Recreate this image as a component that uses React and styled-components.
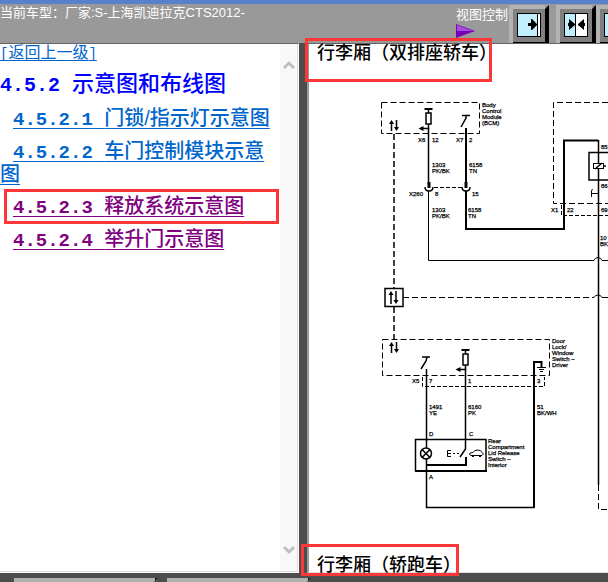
import React from "react";
import styled, { createGlobalStyle } from "styled-components";

const GlobalStyle = createGlobalStyle`
  * {
    box-sizing: border-box;
  }

  body {
    margin: 0;
    background: #4d4d4d;
    font-family: "Liberation Sans", "Noto Sans CJK SC", sans-serif;
  }
`;

// Styled Components
const Page = styled.div`
  display: flex;
  flex-direction: column;
  height: 100vh;
  overflow: hidden;
`;

const Header = styled.header`
  display: grid;
  grid-template-columns: 75% 1fr;
  flex: none;
  height: 43px;
  border-top: 4px solid #5b80cb;
  background: #999;
  color: #fff;
  font-size: 13px;
  line-height: 18px;
  white-space: nowrap;
  overflow: hidden;
`;

const VehicleTitle = styled.div`
  min-width: 0;
  overflow: hidden;
`;

const Tools = styled.div`
  display: flex;
  padding-top: 1px;
`;

const ViewControl = styled.div`
  flex: none;
  width: 53px;
  padding-top: 1px;

  svg {
    display: block;
  }
`;

const ViewButton = styled.button`
  flex: none;
  width: 40px;
  height: 38px;
  margin-right: ${(props) => props.$gap || 0}px;
  padding: 0;
  border: none;
  background: none;
  cursor: pointer;

  svg {
    display: block;
  }
`;

const Frames = styled.div`
  display: grid;
  grid-template-columns: 299px 8px 1fr;
  flex: 1;
  min-height: 0;
`;

const Sidebar = styled.nav`
  display: flex;
  min-width: 0;
  border-top: 1px solid #666;
  border-right: 1px solid #fff;
  border-bottom: 1px solid #fff;
  background: #fff;
`;

const Contents = styled.div`
  flex: 1;
  min-width: 0;
  border-bottom: 1px solid #ddd;
`;

const Scrollbar = styled.div`
  display: flex;
  flex-direction: column;
  justify-content: space-between;
  align-items: center;
  width: 18px;
  padding: 16px 0;
  border-right: 1px solid #ddd;
  border-bottom: 1px solid #ddd;
  background: #f8f8f8;
`;

const Divider = styled.div`
  background: #4d4d4d;
`;

const BackLink = styled.a`
  display: block;
  color: #0066cc;
  font-size: 16px;
  line-height: 18px;
  text-underline-offset: 2px;
  text-decoration-skip-ink: none;
`;

const Mono = styled.span`
  font-family: "Liberation Mono", monospace;
  font-size: ${(props) => props.$size}px;
  font-weight: ${(props) => (props.$bold ? "bold" : "normal")};
  line-height: 1;
  white-space: pre;
`;

const Title = styled.h1`
  margin: 9px 0 10px;
  color: #0000ff;
  font-size: 22px;
  font-weight: 500;
  line-height: 26px;
`;

const TopicList = styled.ul`
  display: flex;
  flex-direction: column;
  gap: 10px;
  margin: 0;
  padding: 0;
  list-style: none;
`;

const Topic = styled.li`
  position: relative;
  font-size: 20px;
  font-weight: 500;
  line-height: 22px;
  text-indent: 13px;
`;

const TopicLink = styled.a`
  color: ${(props) => (props.$visited ? "#800080" : "#0066cc")};
  text-decoration-thickness: 1px;
  text-decoration-skip-ink: none;
  text-underline-offset: 3px;
`;

const Mark = styled.span`
  position: absolute;
  inset: ${(props) => props.$inset};
  border: 3px solid #fb3737;
  pointer-events: none;
`;

const Content = styled.main`
  display: flex;
  flex-direction: column;
  justify-content: space-between;
  min-width: 0;
  border-top: 1px solid #666;
  border-left: 2px solid #999;
  border-bottom: 1px solid #ddd;
  background: #fff;
`;

const SectionTitle = styled.h2`
  position: relative;
  align-self: flex-start;
  flex: none;
  height: ${(props) => (props.$clipped ? 16 : 18)}px;
  margin: 0 0 0 8px;
  color: #000;
  font-size: 18px;
  font-weight: 500;
  line-height: 18px;
  white-space: nowrap;
`;

const DiagramArea = styled.div`
  flex: 1;
  min-height: 0;
  padding-top: 36px;
  overflow: hidden;

  svg {
    display: block;
  }
`;

const BottomBar = styled.footer`
  display: flex;
  flex: none;
  gap: 9px;
  height: 9px;
  padding: 5px 0 0 14px;
  background: #4d4d4d;
`;

const BottomTab = styled.div`
  width: 144px;
  background: #b0b0b0;
  border-right: 3px solid #111;
  clip-path: polygon(0 0, 100% 0, 97% 100%, 0 100%);
`;

const topics = [
  { number: "4.5.2.1", name: "门锁/指示灯示意图" },
  { number: "4.5.2.2", name: "车门控制模块示意图" },
  { number: "4.5.2.3", name: "释放系统示意图", visited: true, marked: true },
  { number: "4.5.2.4", name: "举升门示意图", visited: true },
];

// [x, baseline of the first line, lines]
const labels = [
  [482, 107, ["Body", "Control", "Module", "(BCM)"]],
  [418, 142, ["X6"]],
  [432, 142, ["12"]],
  [456, 142, ["X7"]],
  [469, 142, ["2"]],
  [432, 167, ["1303", "PK/BK"]],
  [469, 167, ["6158", "TN"]],
  [409, 196, ["X260"]],
  [435, 196, ["8"]],
  [472, 196, ["15"]],
  [432, 212, ["1303", "PK/BK"]],
  [468, 212, ["6158", "TN"]],
  [601, 149, ["85"]],
  [601, 188, ["86"]],
  [551, 212, ["X1"]],
  [567, 212, ["22"]],
  [601, 212, ["69"]],
  [600, 240, ["10", "BK"]],
  [552, 343, ["Door", "Lock/", "Window", "Switch –", "Driver"]],
  [412, 383, ["X5"]],
  [429, 383, ["7"]],
  [468, 383, ["1"]],
  [537, 383, ["3"]],
  [429, 409, ["1491", "YE"]],
  [468, 409, ["6160", "PK"]],
  [537, 409, ["51", "BK/WH"]],
  [429, 436, ["D"]],
  [469, 436, ["C"]],
  [429, 479, ["A"]],
  [488, 443, ["Rear", "Compartment", "Lid Release", "Switch –", "Interior"]],
];

const Chevron = ({ up }) => (
  <svg width="12" height="10" viewBox="0 0 12 10" aria-hidden="true">
    <path
      d={up ? "M1 8L6 3L11 8" : "M1 2L6 7L11 2"}
      fill="none"
      stroke="#bfbfbf"
      strokeWidth="3"
    />
  </svg>
);

const ButtonFace = ({ children }) => (
  <svg width="40" height="38" viewBox="0 0 40 38" aria-hidden="true">
    <rect width="36" height="38" fill="#b3b3b3" />
    <rect x="4" y="4" width="32" height="33" fill="#808080" />
    <path d="M36 4L40 0V38H4V37H36Z" fill="#000" />
    {children}
  </svg>
);

const ShowRightIcon = () => (
  <ButtonFace>
    <rect x="8" y="8" width="24" height="24" fill="#000" />
    <rect x="9" y="9" width="19" height="22" fill="#c0f0ff" />
    <rect x="29" y="9" width="2" height="22" fill="#fff" />
    <path d="M19 18H22V14H23L28 19V20L23 25H22V21H19Z" fill="#000" />
  </ButtonFace>
);

const SplitIcon = () => (
  <ButtonFace>
    <rect x="8" y="8" width="24" height="24" fill="#000" />
    <rect x="9" y="9" width="10" height="22" fill="#c0f0ff" />
    <rect x="20" y="9" width="11" height="22" fill="#fff" />
    <path d="M12 18H13V14L19 19V20L13 25V21H12Z" fill="#000" />
    <path d="M29 18H28V14L22 19V20L28 25V21H29Z" fill="#000" />
  </ButtonFace>
);

const ArrowPair = ({ x, y, size }) => (
  <g>
    <path
      d={`M${x} ${y + size}V${y + 2}M${x + 5} ${y}V${y + size - 2}`}
      strokeWidth="1.5"
    />
    <path
      d={`M${x - 2.5} ${y + 4}L${x} ${y}L${x + 2.5} ${y + 4}ZM${x + 2.5} ${y + size - 4}L${x + 5} ${y + size}L${x + 7.5} ${y + size - 4}Z`}
      fill="#000"
      stroke="none"
    />
  </g>
);

const Fuse = ({ x, y }) => (
  <g>
    <path d={`M${x - 4} ${y}H${x + 4}`} strokeWidth="2" />
    <path d={`M${x} ${y}V${y + 4}M${x} ${y + 15}V${y + 19.5}H${x - 8}`} strokeWidth="1.5" />
    <rect x={x - 2.5} y={y + 4} width="5" height="11" strokeWidth="1.5" />
    <path
      d={`M${x - 10} ${y + 19.5}L${x - 5} ${y + 17}V${y + 22}Z`}
      fill="#000"
      stroke="none"
    />
  </g>
);

const Plug = ({ x }) => (
  <g>
    <path d={`M${x} 182V188`} strokeWidth="3" />
    <path d={`M${x - 4} 187Q${x - 4} 191 ${x} 191Q${x + 4} 191 ${x + 4} 187`} strokeWidth="1.5" />
  </g>
);

const WiringDiagram = () => (
  <svg
    width="299"
    height="416"
    viewBox="309 98 299 416"
    fill="none"
    stroke="#000"
    strokeWidth="1"
    role="img"
    aria-label="行李厢释放系统示意图"
  >
    {/* module outlines */}
    <g strokeDasharray="6 3">
      <rect x="381.5" y="102.5" width="98" height="31" />
      <path d="M608 102.5H553.5V203.5H608" />
      <rect x="382.5" y="339.5" width="167" height="36" />
      <path d="M394 134V288M394 307V339" strokeWidth="1.5" />
      <path d="M403 297.5H594M602 297.5H608" />
    </g>
    <g strokeDasharray="4 2">
      <path d="M434 187.5H462" />
      <path d="M561.5 205V215.5H608" />
      <path d="M422.5 377V386.5H544.5V377" />
      <path d="M598.5 485V509.5H608" strokeDasharray="6 3" />
    </g>

    {/* body control module */}
    <ArrowPair x={391.5} y={120} size={11} />
    <Fuse x={428.5} y={109} />
    <path d="M428.5 128V184" strokeWidth="1.5" />
    <path d="M462 115.5H470M466 116V118L461 127" strokeWidth="1.5" />
    <path d="M466 128V184" strokeWidth="2" />
    <Plug x={429} />
    <Plug x={466} />
    <path d="M428.5 191V260.5H594Q595 257.5 598 257.5Q601 257.5 602 260.5H608" />
    <path d="M466 191V229H564V140.5H598" strokeWidth="2" />

    {/* relay */}
    <path d="M598.5 140V485" strokeWidth="1.5" />
    <path d="M608 152.5H589V180H608" strokeWidth="1.5" />
    <rect x="593.5" y="163.5" width="10" height="5" fill="#fff" />
    <path d="M595 169L602 163M603 166H606" strokeWidth="1.5" />
    <path d="M592.5 189L591.5 191V197M591 193.5H599" />
    <path d="M594 297.5Q595 295 598 295Q601 295 602 297.5" />

    {/* data line connector */}
    <rect x="385" y="288.5" width="18" height="18" strokeWidth="1.5" fill="#fff" />
    <ArrowPair x={391} y={291} size={13} />

    {/* driver window switch */}
    <ArrowPair x={391.5} y={342} size={11} />
    <path d="M422 357H430M427 357L426 361L421 369" strokeWidth="1.5" />
    <path d="M426.5 369V507.5H534" strokeWidth="1.5" />
    <Fuse x={465.5} y={350} />
    <path d="M465.5 369V449L460 457" strokeWidth="1.5" />
    <path d="M534 508V362H541.5V367" strokeWidth="2" />
    <path d="M537 367.5H546M539 369.5H544M540 371.5H543" />

    {/* lid release switch */}
    <path d="M415.5 471V439.5H486V471" strokeWidth="1.5" />
    <path d="M415 471H487M426 465H466V457" strokeWidth="2" />
    <circle cx="426" cy="453.5" r="5.5" strokeWidth="1.5" fill="#fff" />
    <path d="M422 449.5L430 457.5M430 449.5L422 457.5" strokeWidth="1.5" />
    <path d="M451 450.5H447.5V456.5H451M447 453.5H451M453 453.5H455M457 453.5H459" />
    <path d="M469.5 454.5Q469 452.5 473 452.5Q474 450 478 450Q481 450 482 452.5Q485 454 482 455.5H471Z" />
    <path d="M472 456.5H474M479 456.5H481" />

    <g
      fill="#000"
      strokeWidth="0.25"
      fontFamily="Liberation Sans, sans-serif"
      fontSize="6"
    >
      {labels.map(([x, y, lines]) => (
        <text key={`${x}-${y}`}>
          {lines.map((line, index) => (
            <tspan key={index} x={x} y={y + index * 6}>
              {line}
            </tspan>
          ))}
        </text>
      ))}
    </g>
  </svg>
);

const App = () => {
  return (
    <>
      <GlobalStyle />
      <Page>
        <Header>
          <VehicleTitle>当前车型：厂家:S-上海凯迪拉克CTS2012-</VehicleTitle>
          <Tools>
            <ViewControl>
              视图控制
              <svg width="20" height="15" viewBox="0 0 20 15" aria-hidden="true">
                <path d="M0 0L19 7L0 14Z" fill="#7a00b8" />
                <path d="M1 1L17 7H1Z" fill="#a64ddb" />
              </svg>
            </ViewControl>
            <ViewButton type="button" aria-label="右侧视图" $gap={7}>
              <ShowRightIcon />
            </ViewButton>
            <ViewButton type="button" aria-label="双栏视图">
              <SplitIcon />
            </ViewButton>
            <ViewButton type="button" aria-label="左侧视图">
              <ShowRightIcon />
            </ViewButton>
          </Tools>
        </Header>

        <Frames>
          <Sidebar>
            <Contents>
              <BackLink href="#back">
                <Mono $size={14}>[</Mono>返回上一级<Mono $size={14}>]</Mono>
              </BackLink>
              <Title>
                <Mono $size={20} $bold>4.5.2 </Mono>示意图和布线图
              </Title>
              <TopicList>
                {topics.map((topic) => (
                  <Topic key={topic.number}>
                    <TopicLink href={`#${topic.number}`} $visited={topic.visited}>
                      <Mono $size={19} $bold>{topic.number} </Mono>
                      {topic.name}
                    </TopicLink>
                    {topic.marked && <Mark $inset="-6px 1px -6px 4px" />}
                  </Topic>
                ))}
              </TopicList>
            </Contents>
            <Scrollbar>
              <Chevron up />
              <Chevron />
            </Scrollbar>
          </Sidebar>
          <Divider />
          <Content>
            <SectionTitle>
              行李厢（双排座轿车）
              <Mark $inset="-6px 5px -20px -12px" />
            </SectionTitle>
            <DiagramArea>
              <WiringDiagram />
            </DiagramArea>
            <SectionTitle $clipped>
              行李厢（轿跑车）
              <Mark $inset="-12px 2px -4px -16px" />
            </SectionTitle>
          </Content>
        </Frames>

        <BottomBar>
          <BottomTab />
          <BottomTab />
        </BottomBar>
      </Page>
    </>
  );
};

export default App;
